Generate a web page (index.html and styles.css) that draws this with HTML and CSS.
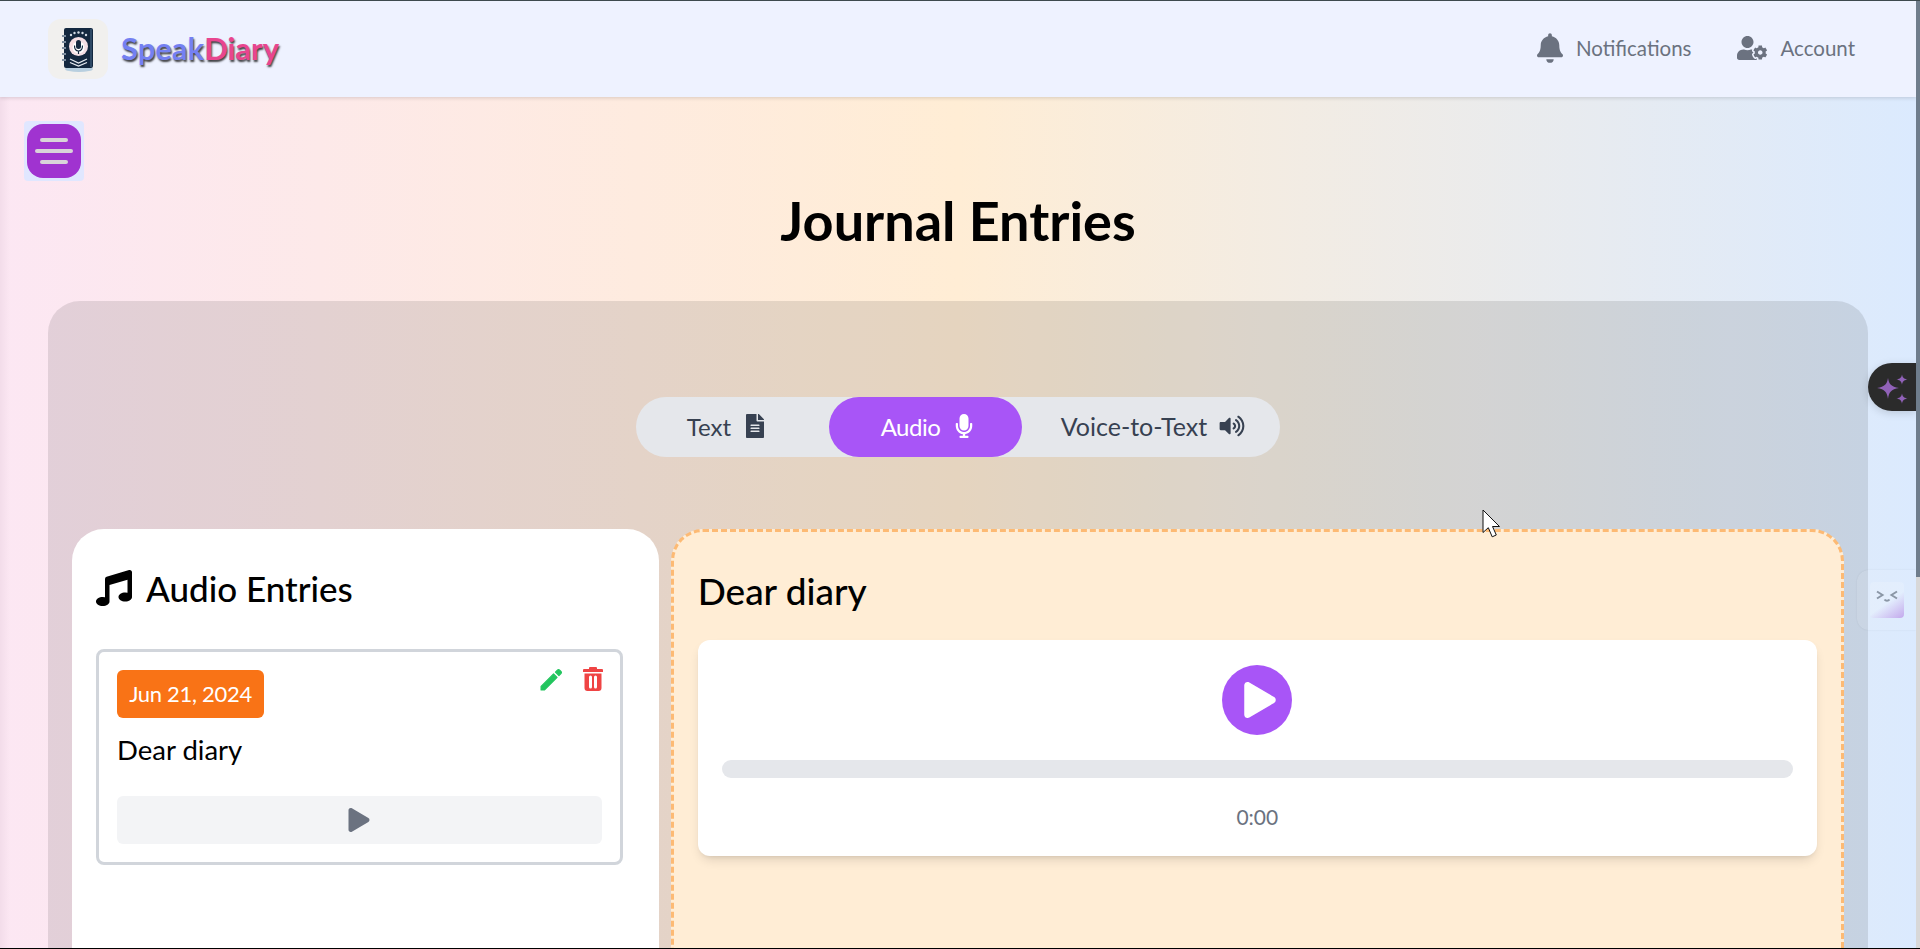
FILE: index.html
```html
<!DOCTYPE html>
<html lang="en">
<head>
    <meta charset="UTF-8">
    <meta name="viewport" content="width=device-width, initial-scale=1.0">
    <title>SpeakDiary - Journal Entries</title>
    <link rel="stylesheet" href="styles.css">
</head>
<body>
<div class="window">
    <div class="page">
        <header class="topbar">
            <div class="brand">
                <div class="brand-logo">
                    <svg width="34" height="46" viewBox="0 0 34 46">
                        <ellipse cx="18" cy="42" rx="14" ry="3" fill="#9fc0d8" opacity="0.7"/>
                        <rect x="3" y="1" width="29" height="40" rx="2" fill="#14283f"/>
                        <rect x="29" y="2" width="2" height="38" fill="#2f4a66"/>
                        <g fill="#7f8fa0">
                            <rect x="1" y="8" width="4" height="2"/>
                            <rect x="1" y="14" width="4" height="2"/>
                            <rect x="1" y="20" width="4" height="2"/>
                            <rect x="1" y="26" width="4" height="2"/>
                            <rect x="1" y="32" width="4" height="2"/>
                        </g>
                        <g fill="#d5dde6">
                            <circle cx="10" cy="8" r="1.2"/>
                            <circle cx="13.500" cy="6" r="1.2"/>
                            <circle cx="17.500" cy="5.500" r="1.2"/>
                            <circle cx="21.500" cy="6" r="1.2"/>
                            <circle cx="25" cy="8" r="1.2"/>
                        </g>
                        <circle cx="17.500" cy="19.500" r="9.500" fill="#f5dfe4"/>
                        <circle cx="17.500" cy="20.500" r="6" fill="#ffffff"/>
                        <rect x="15" y="13" width="5" height="9" rx="2.500" fill="#14283f"/>
                        <path d="M13.500 18.500c0 4 1.500 5.500 4 5.500s4-1.500 4-5.500M17.500 24v3" fill="none" stroke="#14283f" stroke-width="1.200"/>
                        <path d="M9 32l8.500 4 8.500-4M9 35.500l8.500 3.500 8.500-3.500" fill="none" stroke="#e8edf2" stroke-width="1.300"/>
                    </svg>
                </div>
                <div class="brand-name"><span class="brand-speak">Speak</span><span class="brand-diary">Diary</span></div>
            </div>
            <nav class="topnav">
                <a class="topnav-item">
                    <svg class="icon-bell" viewBox="0 0 448 512"><path d="M224 512c35.32 0 63.97-28.65 63.97-64H160.030c0 35.350 28.650 64 63.970 64zm215.390-149.710c-19.320-20.760-55.47-51.990-55.47-154.290 0-77.700-54.480-139.900-127.940-155.160V32c0-17.670-14.320-32-31.980-32s-31.980 14.330-31.980 32v20.840C118.560 68.100 64.080 130.300 64.080 208c0 102.300-36.150 133.530-55.47 154.290-6 6.450-8.660 14.160-8.610 21.710.11 16.400 12.980 32 32.100 32h383.800c19.120 0 32-15.600 32.100-32 .05-7.550-2.610-15.270-8.610-21.710z"/></svg>
                    Notifications
                </a>
                <a class="topnav-item">
                    <svg class="icon-account" viewBox="0 0 640 512"><path d="M610.5 373.300c2.600-14.100 2.600-28.500 0-42.600l25.800-14.900c3-1.700 4.300-5.200 3.300-8.500-6.700-21.600-18.200-41.200-33.200-57.400-2.300-2.500-6-3.100-9-1.400l-25.800 14.900c-10.900-9.300-23.400-16.500-36.900-21.300v-29.800c0-3.400-2.400-6.400-5.700-7.100-22.300-5-45-4.800-66.200 0-3.300.7-5.700 3.700-5.700 7.100v29.800c-13.500 4.800-26 12-36.900 21.300l-25.800-14.900c-2.900-1.700-6.700-1.100-9 1.400-15 16.200-26.500 35.800-33.200 57.400-1 3.300.4 6.800 3.300 8.500l25.800 14.900c-2.600 14.100-2.600 28.500 0 42.600l-25.800 14.900c-3 1.700-4.300 5.200-3.300 8.500 6.700 21.600 18.200 41.100 33.200 57.400 2.300 2.500 6 3.100 9 1.400l25.800-14.900c10.900 9.300 23.400 16.500 36.900 21.300v29.800c0 3.400 2.400 6.400 5.700 7.100 22.300 5 45 4.800 66.200 0 3.300-.7 5.700-3.700 5.700-7.100v-29.800c13.500-4.800 26-12 36.900-21.300l25.800 14.900c2.900 1.700 6.700 1.100 9-1.400 15-16.200 26.500-35.800 33.200-57.400 1-3.300-.4-6.800-3.300-8.500l-25.800-14.900zM496 400.500c-26.800 0-48.500-21.800-48.500-48.500s21.800-48.500 48.500-48.500 48.500 21.800 48.500 48.500-21.700 48.500-48.500 48.500zM224 256c70.700 0 128-57.300 128-128S294.700 0 224 0 96 57.300 96 128s57.300 128 128 128zm201.200 226.500c-2.300-1.200-4.600-2.600-6.800-3.900l-7.900 4.600c-6 3.400-12.800 5.300-19.600 5.300-10.900 0-21.400-4.600-28.900-12.600-18.300-19.800-32.300-43.900-40.200-69.600-5.500-17.700 1.900-36.400 17.900-45.700l7.900-4.600c-.1-2.600-.1-5.200 0-7.800l-7.900-4.600c-16-9.200-23.400-28-17.900-45.700.9-2.900 2.200-5.800 3.200-8.700-3.800-.3-7.500-1.200-11.400-1.200h-16.700c-22.200 10.200-46.900 16-72.900 16s-50.600-5.800-72.900-16h-16.700C60.200 288 0 348.200 0 422.400V464c0 26.500 21.500 48 48 48h352c10.100 0 19.500-3.200 27.200-8.500-1.200-3.800-2-7.700-2-11.800v-9.200z"/></svg>
                    Account
                </a>
            </nav>
        </header>

        <main class="content">
            <h1 class="page-title">Journal Entries</h1>
            <section class="panel">
                <div class="tabs">
                    <button class="tab tab-text">
                        Text
                        <svg class="icon-tab" viewBox="0 0 384 512"><path d="M224 136V0H24C10.700 0 0 10.700 0 24v464c0 13.300 10.700 24 24 24h336c13.300 0 24-10.700 24-24V160H248c-13.200 0-24-10.800-24-24zm64 236c0 6.600-5.400 12-12 12H108c-6.600 0-12-5.400-12-12v-8c0-6.600 5.400-12 12-12h168c6.600 0 12 5.400 12 12v8zm0-64c0 6.600-5.400 12-12 12H108c-6.600 0-12-5.400-12-12v-8c0-6.600 5.400-12 12-12h168c6.600 0 12 5.400 12 12v8zm0-72v8c0 6.600-5.400 12-12 12H108c-6.600 0-12-5.400-12-12v-8c0-6.600 5.400-12 12-12h168c6.600 0 12 5.400 12 12zm96-114.100v6.100H256V0h6.100c6.400 0 12.500 2.500 17 7l97.900 98c4.500 4.500 7 10.600 7 16.900z"/></svg>
                    </button>
                    <button class="tab tab-active">
                        Audio
                        <svg class="icon-tab" viewBox="0 0 352 512"><path d="M176 352c53.020 0 96-42.980 96-96V96c0-53.020-42.980-96-96-96S80 42.980 80 96v160c0 53.020 42.980 96 96 96zm160-160h-16c-8.840 0-16 7.160-16 16v48c0 74.800-64.490 134.820-140.790 127.380C96.710 376.890 48 317.110 48 250.300V208c0-8.840-7.160-16-16-16H16c-8.840 0-16 7.160-16 16v40.160c0 89.640 63.970 169.550 152 181.690V464H96c-8.840 0-16 7.160-16 16v16c0 8.840 7.160 16 16 16h160c8.840 0 16-7.160 16-16v-16c0-8.840-7.160-16-16-16h-56v-33.770C285.710 418.470 352 344.900 352 256v-48c0-8.840-7.160-16-16-16z"/></svg>
                    </button>
                    <button class="tab tab-voice">
                        Voice-to-Text
                        <svg class="icon-volume" viewBox="0 0 576 512"><path d="M215.030 71.050L126.060 160H24c-13.260 0-24 10.740-24 24v144c0 13.250 10.740 24 24 24h102.060l88.970 88.950c15.030 15.030 40.970 4.470 40.970-16.970V88.020c0-21.460-25.960-31.980-40.970-16.970zm233.320-51.080c-11.170-7.330-26.180-4.240-33.510 6.950-7.340 11.170-4.220 26.180 6.950 33.510 66.270 43.490 105.820 116.600 105.820 195.580 0 78.980-39.550 152.090-105.820 195.580-11.170 7.320-14.290 22.340-6.950 33.500 7.040 10.710 21.930 14.560 33.510 6.950C528.270 439.580 576 351.330 576 256S528.270 72.430 448.350 19.970zM480 256c0-63.530-32.060-121.940-85.770-156.240-11.190-7.140-26.030-3.820-33.120 7.460s-3.780 26.210 7.410 33.360C408.270 165.970 432 209.110 432 256s-23.730 90.030-63.480 115.420c-11.190 7.140-14.500 22.070-7.410 33.360 6.510 10.360 21.120 15.140 33.120 7.460C447.940 377.940 480 319.540 480 256zm-141.770-76.870c-11.580-6.330-26.190-2.160-32.610 9.450-6.390 11.610-2.160 26.200 9.450 32.610C327.980 228.280 336 241.630 336 256c0 14.380-8.020 27.720-20.920 34.810-11.610 6.410-15.840 21-9.450 32.610 6.440 11.660 21.050 15.800 32.610 9.450 28.230-15.550 45.770-45 45.770-76.880s-17.540-61.320-45.780-76.860z"/></svg>
                    </button>
                </div>

                <div class="columns">
                    <div class="entries-card">
                        <h2 class="entries-title">
                            <svg class="icon-music" viewBox="0 0 512 512"><path d="M470.380 1.510L150.410 96A32 32 0 0 0 128 126.510v261.410A139 139 0 0 0 96 384c-53 0-96 28.660-96 64s43 64 96 64 96-28.660 96-64V214.320l256-75v184.610a138.400 138.400 0 0 0-32-3.930c-53 0-96 28.660-96 64s43 64 96 64 96-28.650 96-64V32a32 32 0 0 0-41.620-30.490z"/></svg>
                            Audio Entries
                        </h2>
                        <article class="entry">
                            <div class="entry-head">
                                <span class="entry-date">Jun 21, 2024</span>
                                <div class="entry-actions">
                                    <svg class="icon-edit" viewBox="0 0 24 24"><path d="M3.500 17.500V20.500H6.500L17.200 9.800 14.200 6.800zM20.500 6.500c.6-.6.6-1.300 0-1.900l-1.100-1.100c-.6-.6-1.300-.6-1.900 0l-1.700 1.700 3 3z" stroke="#22c55e" stroke-width="1" stroke-linejoin="round"/></svg>
                                    <svg class="icon-trash" viewBox="0 0 20 24"><path fill-rule="evenodd" d="M7 0h6a1 1 0 0 1 1 1v1h5a1 1 0 0 1 1 1v2H0V3a1 1 0 0 1 1-1h5V1a1 1 0 0 1 1-1zM1.500 6.500h17V21a3 3 0 0 1-3 3h-11a3 3 0 0 1-3-3zM6 10v10a1.500 1.500 0 0 0 3 0V10a1.500 1.500 0 0 0-3 0zm5 0v10a1.500 1.500 0 0 0 3 0V10a1.500 1.500 0 0 0-3 0z"/></svg>
                                </div>
                            </div>
                            <p class="entry-text">Dear diary</p>
                            <button class="entry-play">
                                <svg class="icon-play" viewBox="0 0 448 512"><path d="M424.400 214.700L72.400 6.600C43.800-10.300 0 6.100 0 47.900V464c0 37.500 40.700 60.100 72.400 41.300l352-208c31.400-18.500 31.500-64.100 0-82.600z"/></svg>
                            </button>
                        </article>
                    </div>

                    <div class="detail-card">
                        <h2 class="detail-title">Dear diary</h2>
                        <div class="player">
                            <button class="player-btn">
                                <svg viewBox="0 0 448 512"><path d="M424.400 214.700L72.400 6.600C43.800-10.300 0 6.100 0 47.900V464c0 37.500 40.700 60.100 72.400 41.300l352-208c31.400-18.500 31.500-64.100 0-82.600z"/></svg>
                            </button>
                            <div class="player-track"></div>
                            <div class="player-time">0:00</div>
                        </div>
                    </div>
                </div>
            </section>
        </main>

        <button class="menu-btn">
            <span class="menu-bars">
                <span class="menu-bar"></span>
                <span class="menu-bar menu-bar-long"></span>
                <span class="menu-bar"></span>
            </span>
        </button>

        <div class="sparkle-tab">
            <svg width="36" height="36" viewBox="0 0 36 36" fill="#9162b8">
                <path d="M13 5c1 6 3 8.500 11 10-8 1.500-10 4-11 11-1-7-3-9.500-11-11 8-1.500 10-4 11-10z"/>
                <path d="M27 1.500c.6 3 1.600 4.300 5.500 5-3.900.7-4.900 2-5.500 5.200-.6-3.200-1.600-4.500-5.500-5.200 3.900-.7 4.900-2 5.500-5z"/>
                <path d="M27 20.500c.6 3 1.600 4.300 5.500 5-3.900.7-4.900 2-5.500 5.200-.6-3.200-1.600-4.500-5.500-5.200 3.900-.7 4.900-2 5.500-5z"/>
            </svg>
        </div>

        <div class="helper">
            <div class="helper-face">
                <svg width="22" height="12" viewBox="0 0 22 12" fill="none" stroke="#8b97a6" stroke-width="2">
                    <path d="M1 1.500L6.500 5 1 8.500M21 1.500L15.500 5 21 8.500M8.500 9.500c1.200 1.500 3.800 1.500 5 0"/>
                </svg>
            </div>
        </div>

        <svg class="cursor" width="19" height="29" viewBox="0 0 19 29">
            <path d="M1 1V23.500L6.300 18.700 10.200 27.800 14.300 26 10.500 17.500H17.500Z" fill="#fff" stroke="#111" stroke-width="1"/>
        </svg>
    </div>
    <div class="scrollbar"><div class="scrollbar-thumb"></div></div>
</div>
</body>
</html>
```

FILE: styles.css
```css
* {
    box-sizing: border-box;
}
html, body {
    margin: 0;
    height: 100%;
    overflow: hidden;
}
body {
    font-family: "Lato", "Open Sans", sans-serif;
    color: #000;
}
button {
    font-family: inherit;
    border: none;
    cursor: pointer;
}

.window {
    display: flex;
    height: 949px;
    border-top: 1px solid #3d4a4e;
    border-bottom: 1px solid #000;
}
.page {
    position: relative;
    flex: 1;
    min-width: 0;
    overflow: hidden;
    background: linear-gradient(90deg, #fce7f3 0%, #ffedd5 50%, #dbeafe 100%);
}
.page::before {
    content: "";
    position: absolute;
    top: 96px;
    left: 0;
    bottom: 0;
    width: 10px;
    background: linear-gradient(90deg, rgba(120, 80, 110, 0.07), rgba(120, 80, 110, 0));
}
.scrollbar {
    width: 4px;
    background: #d8d8d8;
}
.scrollbar-thumb {
    height: 576px;
    background: #6f7d8c;
}

/* top bar */
.topbar {
    position: relative;
    display: flex;
    align-items: center;
    justify-content: space-between;
    height: 96px;
    padding: 0 61px 0 48px;
    background: #eef2ff;
    box-shadow: 0 1px 4px rgba(0, 0, 0, 0.15);
    z-index: 2;
}
.brand {
    display: flex;
    align-items: center;
    gap: 13px;
}
.brand-logo {
    display: flex;
    align-items: center;
    justify-content: center;
    width: 60px;
    height: 60px;
    padding-top: 2px;
    background: #f1f0ee;
    border-radius: 13px;
}
.brand-name {
    margin-bottom: 2px;
    font-size: 31px;
    font-weight: 700;
    text-shadow: 1px 2px 2px rgba(0, 0, 0, 0.75);
}
.brand-speak {
    color: #7480f2;
}
.brand-diary {
    color: #e8458f;
}
.topnav {
    display: flex;
    align-items: center;
    gap: 46px;
    margin-bottom: 2px;
}
.topnav-item {
    display: flex;
    align-items: center;
    gap: 13px;
    font-size: 20.500px;
    color: #6b7280;
}
.topnav-item svg {
    fill: #6b7280;
}
.icon-bell {
    width: 26px;
    height: 30px;
}
.icon-account {
    width: 30px;
    height: 24px;
}

/* main */
.content {
    padding: 0 48px;
}
.page-title {
    margin: 0;
    padding-top: 94px;
    height: 204px;
    font-size: 54px;
    line-height: 60px;
    font-weight: 700;
    text-align: center;
}
.panel {
    height: 800px;
    padding: 96px 24px 0;
    background: rgba(0, 0, 0, 0.1);
    border-radius: 32px;
}

/* tabs */
.tabs {
    display: grid;
    grid-template-columns: 193px 193px 258px;
    width: 644px;
    height: 60px;
    margin: 0 auto 72px;
    background: #e5e7eb;
    border-radius: 30px;
}
.tab {
    display: flex;
    align-items: center;
    justify-content: center;
    gap: 15px;
    padding: 0 0 2px;
    font-size: 24px;
    color: #374151;
    background: transparent;
    border-radius: 30px;
}
.tab svg {
    fill: #374151;
}
.tab-text {
    padding-right: 14px;
}
.tab-voice {
    padding-left: 4px;
    font-size: 25px;
    gap: 12px;
}
.tab-active {
    padding-left: 3px;
    color: #fff;
    background: #a855f7;
    letter-spacing: -0.5px;
}
.tab-active svg {
    fill: #fff;
}
.icon-tab {
    width: 18px;
    height: 24px;
}
.icon-volume {
    width: 26px;
    height: 22px;
}

.columns {
    display: grid;
    grid-template-columns: 1fr 2fr;
    column-gap: 12px;
}

/* entries list */
.entries-card {
    height: 500px;
    padding: 39px 36px 0 24px;
    background: #fff;
    border-radius: 32px;
}
.entries-title {
    display: flex;
    align-items: center;
    gap: 14px;
    margin: 0 0 41px;
    font-size: 35px;
    line-height: 40px;
    font-weight: 500;
}
.icon-music {
    width: 36px;
    height: 36px;
}
.entry {
    height: 216px;
    padding: 18px;
    border: 3px solid #d1d5db;
    border-radius: 8px;
}
.entry-head {
    display: flex;
    align-items: flex-start;
    justify-content: space-between;
}
.entry-date {
    width: 147px;
    height: 48px;
    font-size: 22px;
    line-height: 47px;
    letter-spacing: -0.3px;
    text-align: center;
    color: #fff;
    background: #f97316;
    border-radius: 6px;
}
.entry-actions {
    display: flex;
    gap: 18px;
    margin: -4px -1px 0 0;
}
.icon-edit {
    width: 28px;
    height: 28px;
    fill: #22c55e;
}
.icon-trash {
    width: 20px;
    height: 24px;
    margin-top: 1px;
    fill: #ef4444;
}
.entry-text {
    margin: 16px 0 30px;
    font-size: 27.500px;
    line-height: 32px;
}
.entry-play {
    display: flex;
    align-items: center;
    justify-content: center;
    width: 100%;
    height: 48px;
    background: #f3f4f6;
    border-radius: 6px;
}
.icon-play {
    width: 22px;
    height: 24px;
    fill: #6b7280;
}

/* selected entry */
.detail-card {
    height: 500px;
    padding: 24px;
    background: #ffedd5;
    border: 3px dashed #fdba74;
    border-radius: 32px;
}
.detail-title {
    margin: 15px 0 29px;
    font-size: 37px;
    line-height: 40px;
    font-weight: 500;
}
.player {
    display: flex;
    flex-direction: column;
    align-items: center;
    height: 216px;
    padding: 25px 24px;
    background: #fff;
    border-radius: 12px;
    box-shadow: 0 6px 12px -3px rgba(0, 0, 0, 0.14), 0 3px 5px -3px rgba(0, 0, 0, 0.1);
}
.player-btn {
    display: flex;
    align-items: center;
    justify-content: center;
    width: 70px;
    height: 70px;
    padding: 0 0 0 5px;
    background: #a855f7;
    border-radius: 50%;
}
.player-btn svg {
    width: 32px;
    height: 36px;
    fill: #fff;
}
.player-track {
    width: 100%;
    height: 18px;
    margin-top: 25px;
    background: #e5e7eb;
    border-radius: 9px;
}
.player-time {
    margin-top: 25px;
    font-size: 21px;
    line-height: 28px;
    color: #6b7280;
}

/* overlays */
.menu-btn {
    position: absolute;
    top: 120px;
    left: 24px;
    width: 60px;
    height: 60px;
    padding: 3px;
    background: #e0e7ff;
    border-radius: 4px;
}
.menu-bars {
    display: flex;
    flex-direction: column;
    align-items: center;
    justify-content: center;
    gap: 7px;
    height: 100%;
    background: #a033d0;
    border-radius: 16px;
}
.menu-bar {
    width: 28px;
    height: 4px;
    background: #d9d3d9;
    border-radius: 2px;
}
.menu-bar-long {
    width: 38px;
}
.sparkle-tab {
    position: absolute;
    top: 362px;
    right: 0;
    display: flex;
    align-items: center;
    width: 48px;
    height: 48px;
    padding: 7px 0 0 7px;
    background: #2b2b2b;
    border-radius: 24px 0 0 24px;
    box-shadow: 0 2px 8px rgba(0, 0, 0, 0.15);
}
.helper {
    position: absolute;
    top: 569px;
    right: 0;
    display: flex;
    align-items: center;
    width: 59px;
    height: 60px;
    padding-left: 13px;
    background: rgba(255, 255, 255, 0.08);
    border-radius: 12px 0 0 12px;
    box-shadow: 0 0 2px rgba(0, 0, 0, 0.08);
}
.helper-face {
    display: flex;
    align-items: flex-start;
    justify-content: center;
    width: 34px;
    height: 36px;
    padding-top: 8px;
    background: linear-gradient(145deg, rgba(255, 255, 255, 0.15) 55%, #c3a8ec 100%);
    border-radius: 4px;
}
.cursor {
    position: absolute;
    top: 508px;
    left: 1482px;
    z-index: 5;
}
```
